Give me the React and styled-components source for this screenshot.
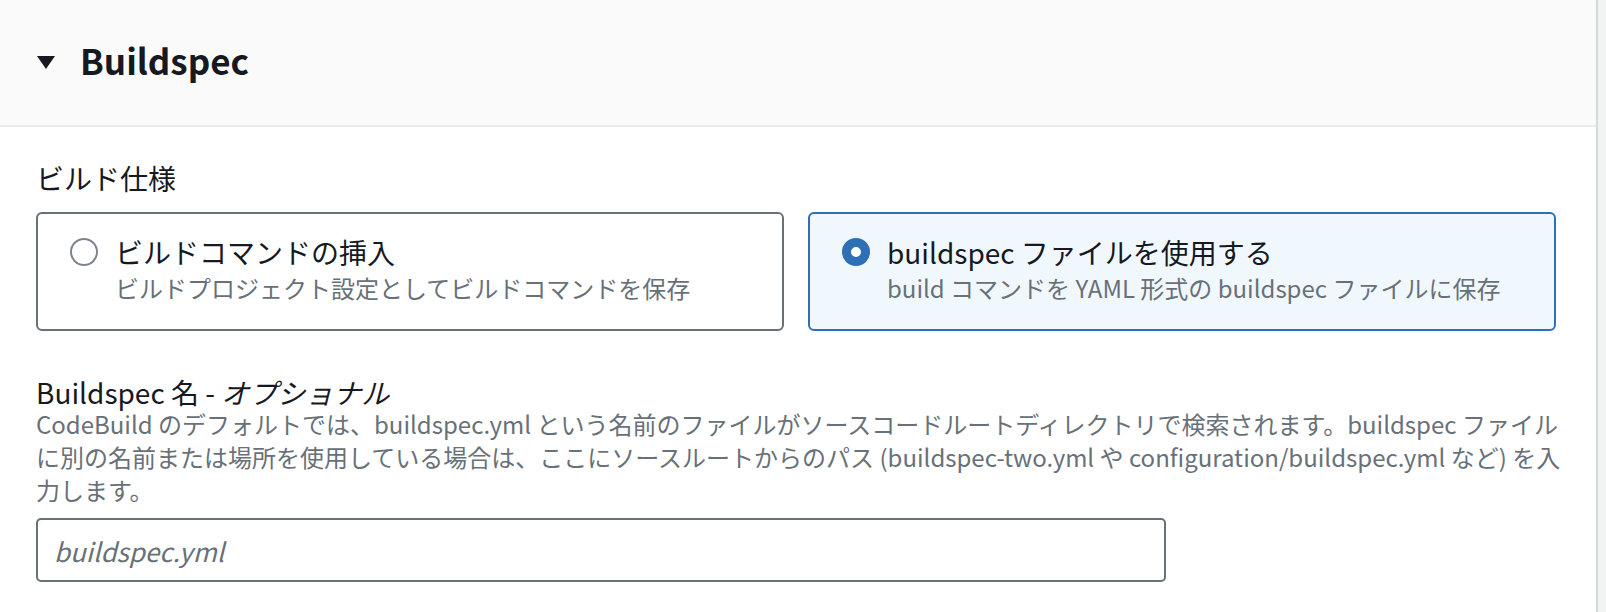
import React from 'react'
import styled, { createGlobalStyle } from 'styled-components'

const GlobalStyle = createGlobalStyle`
  html, body {
    margin: 0;
    padding: 0;
    background: #f2f3f3;
  }
  body {
    font-family: "Noto Sans CJK JP", "Noto Sans", sans-serif;
    color: #16191f;
  }
`

const Panel = styled.div`
  width: 1596px;
  min-height: 612px;
  background: #ffffff;
  border-right: 2px solid #d5dbdb;
`

const Header = styled.div`
  height: 125px;
  background: #fafafa;
  border-bottom: 2px solid #eaeded;
  display: flex;
  align-items: center;
  padding-left: 37px;
  gap: 25px;
  box-sizing: content-box;
`

const Title = styled.h2`
  margin: 0;
  font-size: 35px;
  font-weight: 700;
  line-height: 40px;
  color: #16191f;
  padding-bottom: 6px;
`

const Body = styled.div`
  padding: 31px 40px 0 36px;
`

const Label = styled.div`
  font-size: 28px;
  line-height: ${p => p.$lh || 40}px;
  color: #16191f;
  margin-top: ${p => p.$mt || 0}px;

  em {
    font-style: italic;
  }
`

const Tiles = styled.div`
  display: grid;
  grid-template-columns: 1fr 1fr;
  gap: 24px;
  margin-top: 14px;
`

const Tile = styled.div`
  border: 2px solid ${p => (p.$checked ? '#2f6fb5' : '#687078')};
  background: ${p => (p.$checked ? '#f1f8fd' : '#ffffff')};
  border-radius: 6px;
  padding: 19px 32px 24px 32px;
  display: flex;
  gap: 17px;
  align-items: flex-start;
`

const Radio = styled.span`
  flex: none;
  width: 28px;
  height: 28px;
  margin-top: 5px;
  border-radius: 50%;
  box-sizing: border-box;
  border: ${p => (p.$checked ? '9px solid #2f6fb5' : '2px solid #7d8490')};
  background: #fff;
`

const TileText = styled.div`
  display: flex;
  flex-direction: column;
`

const TileTitle = styled.div`
  font-size: 28px;
  line-height: 38px;
  color: #16191f;
`

const Hint = styled.div`
  font-size: 24px;
  line-height: ${p => p.$lh || 34}px;
  color: #687078;
  white-space: ${p => (p.$nowrap ? 'nowrap' : 'normal')};
`

const Input = styled.input`
  display: block;
  margin-top: 12px;
  width: 1130px;
  height: 64px;
  box-sizing: border-box;
  border: 2px solid #687078;
  border-radius: 5px;
  padding: 0 16px;
  font-family: "Noto Sans CJK JP", "Noto Sans", sans-serif;
  font-size: 26px;
  color: #16191f;
  outline: none;

  &::placeholder {
    color: #687078;
    font-style: italic;
  }
`

const Caret = () => (
  <svg width="18" height="14" viewBox="0 0 18 14">
    <path d="M0 0 H18 L9 13 Z" fill="#16191f" />
  </svg>
)

const options = [
  {
    title: 'ビルドコマンドの挿入',
    hint: 'ビルドプロジェクト設定としてビルドコマンドを保存',
    checked: false,
  },
  {
    title: 'buildspec ファイルを使用する',
    hint: 'build コマンドを YAML 形式の buildspec ファイルに保存',
    checked: true,
  },
]

export default function App() {
  return (
    <>
      <GlobalStyle />
      <Panel>
        <Header>
          <Caret />
          <Title>Buildspec</Title>
        </Header>
        <Body>
          <Label>ビルド仕様</Label>
          <Tiles>
            {options.map(o => (
              <Tile key={o.title} $checked={o.checked}>
                <Radio $checked={o.checked} />
                <TileText>
                  <TileTitle>{o.title}</TileTitle>
                  <Hint>{o.hint}</Hint>
                </TileText>
              </Tile>
            ))}
          </Tiles>
          <Label $mt={46} $lh={30}>
            Buildspec 名 - <em>オプショナル</em>
          </Label>
          <Hint $nowrap $lh={33}>
            CodeBuild のデフォルトでは、buildspec.yml という名前のファイルがソースコードルートディレクトリで検索されます。buildspec ファイル
            <br />
            に別の名前または場所を使用している場合は、ここにソースルートからのパス (buildspec-two.yml や configuration/buildspec.yml など) を入
            <br />
            力します。
          </Hint>
          <Input placeholder="buildspec.yml" />
        </Body>
      </Panel>
    </>
  )
}
